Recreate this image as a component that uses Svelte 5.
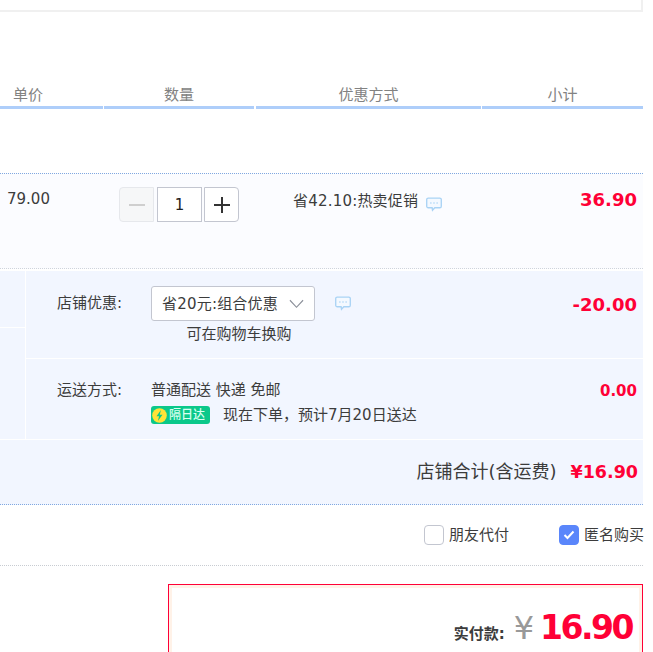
<script>
  const columns = [
    { name: '单价', width: 103, gap: 0, align: 'left' },
    { name: '数量', width: 150, gap: 1, align: 'center' },
    { name: '优惠方式', width: 225, gap: 2, align: 'center' },
    { name: '小计', width: 161, gap: 1, align: 'center' },
  ]
</script>

{#snippet bubble()}
  <svg class="bubble" width="16" height="15" viewBox="0 0 18 16" aria-hidden="true">
    <path d="M2.5 .8h13a1.7 1.7 0 0 1 1.7 1.7v7.5a1.7 1.7 0 0 1-1.7 1.7h-5.6l-2.6 2.8-.4-2.8H2.5A1.7 1.7 0 0 1 .8 10V2.500A1.700 1.700 0 0 1 2.500 .8z" fill="#f4f9ff" stroke="#a9d3f5" stroke-width="1.500" />
    <circle cx="5.500" cy="6.300" r=".9" fill="#a9d3f5" />
    <circle cx="9" cy="6.300" r=".9" fill="#a9d3f5" />
    <circle cx="12.500" cy="6.300" r=".9" fill="#a9d3f5" />
  </svg>
{/snippet}

<div class="page">
  <div class="top-box"></div>

  <div class="head">
    {#each columns as c}
      <div class="col {c.align}" style="width: {c.width}px; margin-left: {c.gap}px">{c.name}</div>
    {/each}
  </div>

  <div class="item">
    <div class="price">79.00</div>
    <div class="stepper">
      <span class="btn minus disabled"><i></i></span>
      <span class="qty">1</span>
      <span class="btn plus"><i></i><b></b></span>
    </div>
    <div class="promo"><span class="wide">省42.10:热卖促销</span> {@render bubble()}</div>
    <div class="subtotal">36.90</div>
  </div>

  <div class="shop">
    <div class="side"><div class="side-a"></div></div>
    <div class="rows">
      <div class="row coupon">
        <span class="label">店铺优惠:</span>
        <div class="coupon-body">
          <div class="select-line">
            <div class="select">
              <span class="wide">省20元:组合优惠</span>
              <svg width="15" height="10" viewBox="0 0 16 10" aria-hidden="true"><path d="M1 1l7 7.500L15 1" fill="none" stroke="#8b8f99" stroke-width="1.200" /></svg>
            </div>
            {@render bubble()}
          </div>
          <div class="hint">可在购物车换购</div>
        </div>
        <span class="amount big">-20.00</span>
      </div>
      <div class="row ship">
        <span class="label">运送方式:</span>
        <div class="ship-body">
          <div>普通配送 快递 免邮</div>
          <div class="eta">
            <span class="badge">
              <svg width="15" height="15" viewBox="0 0 14 14" aria-hidden="true">
                <circle cx="7" cy="7" r="6.800" fill="#ffe338" />
                <path d="M8.300 1.800L4.200 7.700h2.400L5.500 12.200 9.800 6.200H7.300z" fill="#0bc88a" />
              </svg>
              隔日达
            </span>
            <span>现在下单&#xFF0C;预计7月20日送达</span>
          </div>
        </div>
        <span class="amount">0.00</span>
      </div>
    </div>
  </div>

  <div class="total">
    <span class="total-label">店铺合计(含运费)</span>
    <span class="total-value">¥16.90</span>
  </div>

  <div class="options">
    <label class="opt friend"><span class="box"></span>朋友代付</label>
    <label class="opt anon">
      <span class="box on">
        <svg width="12" height="10" viewBox="0 0 12 10" aria-hidden="true"><path d="M1.500 5l3 3 6-6.500" fill="none" stroke="#fff" stroke-width="2" /></svg>
      </span>匿名购买
    </label>
  </div>

  <div class="pay">
    <div class="pay-inner">
      <span class="pay-label">实付款:</span>
      <span class="yen">¥</span>
      <span class="pay-value">16.90</span>
    </div>
  </div>
</div>

<style>
  :global(body) {
    margin: 0;
    background: #fff;
  }
  .page {
    width: 643px;
    height: 652px;
    padding-right: 10px;
    overflow: hidden;
    font: 15px/20px 'DejaVu Sans', 'Noto Sans CJK SC', sans-serif;
    color: #3c3c3c;
  }
  .page :global(*) {
    box-sizing: border-box;
  }
  .wide {
    letter-spacing: 0.2px;
  }
  .top-box {
    height: 12px;
    border-bottom: 2px solid #f0f0f0;
    border-right: 2px solid #f0f0f0;
  }
  .head {
    display: flex;
    margin-top: 73px;
    color: #828282;
  }
  .col {
    height: 24px;
    border-bottom: 3px solid #aecefa;
    line-height: 20px;
  }
  .col.left {
    padding-left: 13px;
  }
  .col.center {
    text-align: center;
  }
  .item {
    display: grid;
    grid-template-columns: 112px 174px 1fr auto;
    margin-top: 64px;
    height: 96px;
    padding: 0 6px 0 7px;
    background: #fbfcff;
    border-top: 1px dotted #80a8e0;
    border-bottom: 1px dotted #cfd4dc;
  }
  .price {
    margin-top: 15px;
  }
  .stepper {
    display: flex;
    gap: 2px;
    margin-top: 13px;
    height: 35px;
  }
  .btn,
  .qty {
    display: flex;
    align-items: center;
    justify-content: center;
    height: 35px;
    border: 1px solid #c3c6d0;
    background: #fff;
  }
  .qty {
    width: 45px;
    color: #222;
  }
  .btn {
    position: relative;
    width: 35px;
  }
  .btn i {
    display: block;
    width: 16px;
    height: 2px;
    background: #333;
  }
  .btn b {
    position: absolute;
    left: 16px;
    top: 9px;
    width: 2px;
    height: 16px;
    background: #333;
  }
  .minus {
    margin-right: 1px;
    border-color: #e6e8ec;
    background: #f6f7f8;
    border-radius: 4px 0 0 4px;
  }
  .minus i {
    background: #cfcfcf;
  }
  .plus {
    border-radius: 0 4px 4px 0;
  }
  .promo {
    display: flex;
    align-items: flex-start;
    gap: 8px;
    margin-top: 17px;
    white-space: nowrap;
  }
  .bubble {
    flex: none;
    margin-top: 6px;
  }
  .subtotal {
    margin-top: 14px;
    font-size: 18px;
    line-height: 24px;
    font-weight: 700;
    color: #ff0036;
  }
  .shop {
    display: flex;
    margin-top: 2px;
    height: 169px;
    background: #f2f6ff;
    border-bottom: 1px solid #fff;
  }
  .side {
    flex: none;
    width: 26px;
    border-right: 1px solid #fff;
  }
  .side-a {
    height: 57px;
    border-bottom: 1px solid #fff;
  }
  .rows {
    flex: 1;
    min-width: 0;
  }
  .row {
    display: grid;
    grid-template-columns: 94px 1fr auto;
    padding: 0 6px 0 31px;
  }
  .coupon {
    height: 88px;
    padding-top: 15px;
    border-bottom: 1px solid #fff;
  }
  .ship {
    height: 80px;
    padding-top: 21px;
  }
  .coupon .label {
    line-height: 35px;
  }
  .select-line {
    display: flex;
    align-items: center;
    gap: 20px;
  }
  .select-line .bubble {
    margin-top: -1px;
  }
  .select {
    display: flex;
    align-items: center;
    justify-content: space-between;
    width: 164px;
    height: 35px;
    padding: 0 10px 0 10px;
    background: #fff;
    border: 1px solid #c3c6d0;
    border-radius: 3px;
    white-space: nowrap;
  }
  .hint {
    width: 176px;
    text-align: center;
    margin-top: 3px;
  }
  .amount {
    margin-top: 1px;
    font-weight: 700;
    color: #ff0036;
  }
  .amount.big {
    font-size: 18px;
    line-height: 24px;
    margin-top: 7px;
  }
  .eta {
    display: flex;
    align-items: center;
    gap: 13px;
    margin-top: 5px;
    white-space: nowrap;
  }
  .badge {
    display: flex;
    align-items: center;
    gap: 2px;
    width: 59px;
    height: 18px;
    padding-left: 1px;
    font-size: 12px;
    font-weight: 500;
    color: #d8fff0;
    background: #0bc88a;
    border-radius: 3px;
  }
  .total {
    display: flex;
    justify-content: flex-end;
    align-items: center;
    gap: 14px;
    height: 65px;
    padding-right: 5px;
    background: #f2f6ff;
    border-bottom: 1px dotted #80a8e0;
  }
  .total-label {
    font-size: 18px;
  }
  .total-value {
    font-size: 17.500px;
    font-weight: 700;
    color: #ff0036;
  }
  .options {
    display: flex;
    height: 61px;
    padding: 20px 0 0 424px;
    gap: 50px;
    border-bottom: 1px dotted #c8ccd2;
    white-space: nowrap;
  }
  .opt {
    display: flex;
    align-items: center;
    gap: 5px;
    height: 20px;
  }
  .box {
    display: flex;
    align-items: center;
    justify-content: center;
    flex: none;
    width: 20px;
    height: 20px;
    border: 1px solid #c3c6d0;
    border-radius: 4px;
    background: #fff;
  }
  .box.on {
    background: #5a86fb;
    border-color: #5a86fb;
  }
  .pay {
    margin: 18px 0 0 168px;
    height: 80px;
    border: 1px solid #ff0036;
  }
  .pay-inner {
    display: flex;
    align-items: baseline;
    justify-content: flex-end;
    height: 100%;
    padding: 22px 7px 0 0;
    border: 3px solid #fff2e8;
    border-bottom: 0;
  }
  .pay-label {
    font-size: 15px;
    font-weight: 700;
    margin-right: 9px;
  }
  .yen {
    font-size: 32px;
    line-height: 36px;
    color: #999;
    margin-right: 6px;
  }
  .pay-value {
    font-size: 33px;
    line-height: 36px;
    font-weight: 700;
    letter-spacing: -2.500px;
    color: #ff0036;
  }
</style>
